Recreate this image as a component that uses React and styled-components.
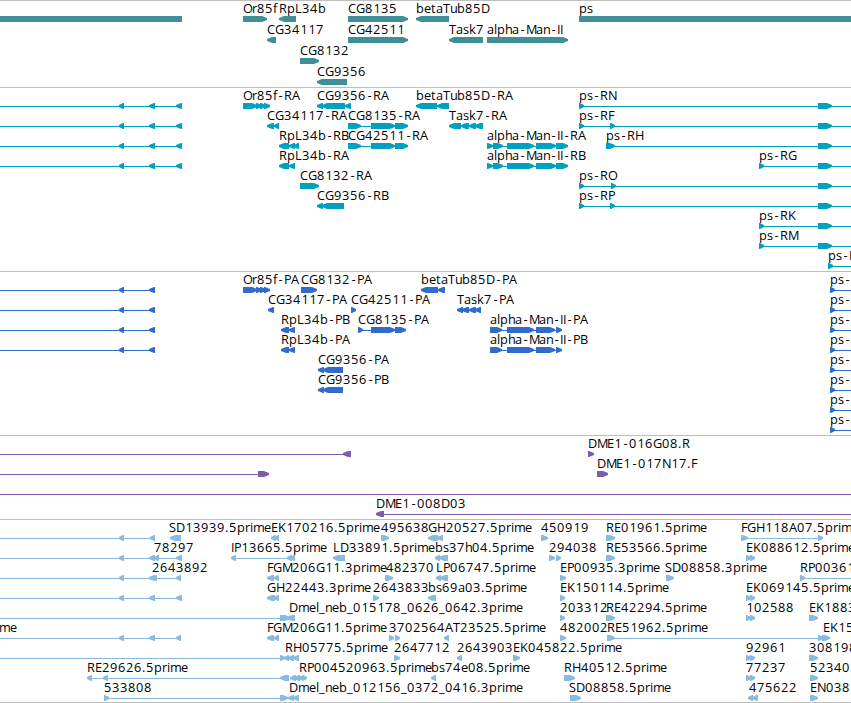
// App.jsx
import styled, { createGlobalStyle } from "styled-components";

const WIDTH = 851;

// advance of each glyph in the label face, in whole pixels
const ADVANCE = {
  A: 8, C: 8, D: 9, E: 7, F: 6, G: 9, H: 9, I: 3, K: 8, L: 7, M: 10, N: 9, O: 9,
  P: 7, R: 8, S: 7, T: 7, a: 7, b: 8, e: 7, f: 4, h: 7, i: 3, k: 7, l: 3,
  m: 11, n: 7, p: 8, r: 5, s: 6, t: 5, u: 7, "-": 7, ".": 4, _: 6,
};

// narrow glyphs sit in the middle of their cell
const OFFSET = { "-": 1.4, 1: 0.5 };

const glyphPositions = (text, start) => {
  let x = start;
  return [...text]
    .map((char) => {
      const current = x + (OFFSET[char] ?? 0);
      x += ADVANCE[char] ?? 8;
      return current;
    })
    .join(" ");
};

// item: { row, label, at, line: [from, to], parts: [[from, to, strand]] }
const item = (row, label, at, parts, line) => ({ row, label, at, parts, line });
const R = (...spans) => spans.map(([a, b]) => [a, b, "R"]);
const L = (...spans) => spans.map(([a, b]) => [a, b, "L"]);

const genes = [
  item(0, "", 0, [[0, 182, ""]]),
  item(0, "Or85f", 243, R([243, 267])),
  item(0, "RpL34b", 279, L([279, 296])),
  item(0, "CG8135", 348, R([348, 408])),
  item(0, "betaTub85D", 416, L([416, 449])),
  item(0, "ps", 579, [[579, 851, ""]]),
  item(1, "CG34117", 267, L([267, 276])),
  item(1, "CG42511", 348, R([348, 408])),
  item(1, "Task7", 449, L([449, 483])),
  item(1, "alpha-Man-II", 487, R([487, 568])),
  item(2, "CG8132", 300, R([300, 319])),
  item(3, "CG9356", 317, L([317, 347])),
];

const or85f = R([243, 257], [256, 262], [260, 266], [264, 270]);
const cg8135 = R([348, 361], [371, 395], [395, 408]);
const alphaRna = R([487, 493], [493, 503], [507, 534], [536, 556], [556, 568]);
const alphaCds = R([490, 502], [507, 534], [536, 555], [556, 562]);

const transcripts = [
  ...[0, 1, 2, 3].map((row) =>
    item(row, "", 0, L([119, 124], [149, 155], [176, 182]), [0, 182])
  ),
  item(0, "Or85f-RA", 243, or85f),
  item(0, "CG9356-RA", 317, L([317, 323], [322, 345], [345, 351])),
  item(0, "betaTub85D-RA", 416, L([416, 437], [437, 449])),
  item(0, "ps-RN", 579, R([579, 584], [818, 832]), [579, 851]),
  item(1, "CG34117-RA", 267, L([267, 274], [274, 279])),
  item(1, "CG8135-RA", 348, cg8135, [348, 408]),
  item(1, "Task7-RA", 449, L([449, 461], [461, 469], [469, 476], [475, 483])),
  item(1, "ps-RF", 579, R([579, 584], [610, 615], [818, 832]), [579, 851]),
  item(2, "RpL34b-RB", 279, L([279, 289], [289, 295], [294, 299])),
  item(2, "CG42511-RA", 348, cg8135, [348, 408]),
  item(2, "alpha-Man-II-RA", 487, alphaRna, [487, 568]),
  item(2, "ps-RH", 606, R([606, 615], [818, 832]), [606, 851]),
  item(3, "RpL34b-RA", 279, L([279, 289], [289, 295])),
  item(3, "alpha-Man-II-RB", 487, alphaRna, [487, 568]),
  item(3, "ps-RG", 759, R([759, 764], [818, 832]), [759, 851]),
  item(4, "CG8132-RA", 300, R([300, 319])),
  item(4, "ps-RO", 579, R([579, 584], [611, 616], [818, 832]), [579, 851]),
  item(5, "CG9356-RB", 317, L([317, 323], [322, 344])),
  item(5, "ps-RP", 579, R([579, 584], [610, 615], [818, 832]), [579, 851]),
  item(6, "ps-RK", 759, R([759, 764], [818, 832]), [759, 851]),
  item(7, "ps-RM", 759, R([759, 764], [818, 832]), [759, 851]),
  item(8, "ps-R", 828, R([828, 833]), [828, 851]),
];

const proteins = [
  ...[0, 1, 2, 3].map((row) => item(row, "", 0, L([119, 124], [149, 155]), [0, 155])),
  item(0, "Or85f-PA", 243, or85f),
  item(0, "CG8132-PA", 301, R([301, 317])),
  item(0, "betaTub85D-PA", 421, L([421, 438], [438, 445])),
  item(1, "CG34117-PA", 268, L([268, 274])),
  item(1, "CG42511-PA", 351, R([351, 356])),
  item(1, "Task7-PA", 457, L([457, 463], [462, 469], [469, 476], [475, 481])),
  item(2, "RpL34b-PB", 281, L([281, 289], [289, 295])),
  item(2, "CG8135-PA", 358, R([358, 363], [371, 395], [395, 406]), [358, 406]),
  item(2, "alpha-Man-II-PA", 490, alphaCds, [490, 561]),
  item(3, "RpL34b-PA", 281, L([281, 289], [289, 295])),
  item(3, "alpha-Man-II-PB", 490, alphaCds, [490, 561]),
  item(4, "CG9356-PA", 318, L([318, 324], [323, 343])),
  item(5, "CG9356-PB", 318, L([318, 324], [323, 343])),
  ...[0, 1, 2, 3, 4, 5, 6, 7].map((row) =>
    item(row, "ps-", 830, R([830, 835]), [830, 851])
  ),
];

const clones = [
  item(0, "", 0, L([343, 351]), [0, 351]),
  item(0, "DME1-016G08.R", 588, R([588, 594])),
  item(1, "", 0, R([258, 269]), [0, 269]),
  item(1, "DME1-017N17.F", 597, R([597, 608])),
  item(2, "", 0, [], [0, 851]),
  item(3, "DME1-008D03", 376, L([376, 384]), [376, 851]),
];

const insertion = R([746, 751], [750, 755]);

const ests = [
  item(0, "", 0, L([119, 124], [150, 155]), [0, 155]),
  item(0, "SD13939.5prime", 169, L([170, 181])),
  item(0, "EK170216.5prime", 271, L([271, 276], [275, 279])),
  item(0, "495638", 381, R([381, 389])),
  item(0, "GH20527.5prime", 428, L([428, 438], [437, 443])),
  item(0, "450919", 541, R([541, 548])),
  item(0, "RE01961.5prime", 606, R([606, 615])),
  item(0, "FGH118A07.5prime", 741, R([741, 748], [818, 823]), [741, 823]),
  item(1, "78297", 154, L([119, 124], [149, 155], [154, 159], [176, 182]), [0, 182]),
  item(1, "IP13665.5prime", 231, L([231, 236], [287, 292], [290, 295]), [231, 294]),
  item(1, "LD33891.5prime", 333, L([333, 345])),
  item(1, "bs37h04.5prime", 435, L([435, 440], [439, 448])),
  item(1, "294038", 549, R([549, 555], [556, 561])),
  item(1, "RE53566.5prime", 606, R([606, 615])),
  item(1, "EK088612.5prime", 746, insertion),
  item(2, "2643892", 152, L([119, 124], [149, 155], [152, 157], [176, 181]), [0, 181]),
  item(2, "FGM206G11.3prime", 267, L([267, 274], [274, 279])),
  item(2, "482370", 386, R([385, 393])),
  item(2, "LP06747.5prime", 436, L([436, 441], [440, 448])),
  item(2, "EP00935.3prime", 560, R([560, 566])),
  item(2, "SD08858.3prime", 665, R([666, 674])),
  item(2, "RP00361", 800, R([800, 805]), [800, 851]),
  item(3, "", 0, L([119, 124], [149, 155], [176, 182]), [0, 182]),
  item(3, "GH22443.3prime", 267, L([267, 275], [274, 279])),
  item(3, "2643833", 373, R([373, 379])),
  item(3, "bs69a03.5prime", 428, L([428, 436])),
  item(3, "EK150114.5prime", 560, R([560, 565])),
  item(3, "EK069145.5prime", 746, insertion),
  item(4, "Dmel_neb_015178_0626_0642.3prime", 289, [...R([280, 290]), ...L([287, 295])], [0, 295]),
  item(4, "203312", 560, R([560, 565])),
  item(4, "RE42294.5prime", 606, R([606, 615])),
  item(4, "102588", 746, insertion),
  item(4, "EK1883", 809, R([809, 818])),
  item(5, "me", -1, L([119, 124], [149, 155], [176, 181]), [0, 181]),
  item(5, "FGM206G11.5prime", 267, L([267, 274], [274, 279])),
  item(5, "3702564", 389, R([389, 394], [395, 400])),
  item(5, "AT23525.5prime", 445, L([444, 449])),
  item(5, "482002", 560, R([560, 566])),
  item(5, "RE51962.5prime", 607, R([607, 615], [818, 823], [822, 830]), [607, 826]),
  item(5, "EK15", 823, []),
  item(6, "RH05775.5prime", 285, [...R([280, 285]), ...L([284, 289], [288, 294], [293, 299])], [0, 299]),
  item(6, "2647712", 394, R([394, 400])),
  item(6, "2643903", 457, L([457, 462])),
  item(6, "EK045822.5prime", 513, R([513, 520])),
  item(6, "92961", 746, insertion),
  item(6, "308198", 809, R([809, 818])),
  item(7, "RE29626.5prime", 87, L([87, 92], [103, 108], [280, 289]), [87, 289]),
  item(7, "RP004520963.5prime", 299, [...L([290, 296], [294, 300]), ...R([298, 303], [302, 307])]),
  item(7, "bs74e08.5prime", 431, L([431, 436])),
  item(7, "RH40512.5prime", 564, R([564, 575])),
  item(7, "77237", 746, insertion),
  item(7, "52340", 810, R([810, 818])),
  item(8, "533808", 104, R([104, 109], [280, 288]), [104, 288]),
  item(8, "Dmel_neb_012156_0372_0416.3prime", 289, L([288, 294], [293, 299])),
  item(8, "SD08858.5prime", 569, R([570, 581])),
  item(8, "475622", 749, L([748, 753], [752, 758])),
  item(8, "EN038", 810, R([810, 818])),
];

const tracks = [
  { name: "genes", color: "#408e96", height: 87, pitch: 21, items: genes },
  { name: "transcripts", color: "#00a0c0", height: 184, pitch: 20, items: transcripts },
  { name: "proteins", color: "#316bce", height: 164, pitch: 20, items: proteins },
  { name: "clones", color: "#7a5caa", height: 84, pitch: 20, items: clones },
  { name: "ests", color: "#88bbdd", height: 183, pitch: 20, items: ests },
];

const blockPath = ([from, to, strand]) => {
  const tip = Math.min(5, to - from - 1);
  if (strand === "R") {
    return `M${from} 15H${to - tip}L${to} 17V19L${to - tip} 21H${from}Z`;
  }
  if (strand === "L") {
    return `M${to} 15H${from + tip}L${from} 17V19L${from + tip} 21H${to}Z`;
  }
  return `M${from} 15H${to}V21H${from}Z`;
};

const Feature = ({ feature, pitch }) => (
  <g transform={`translate(0 ${feature.row * pitch})`}>
    {feature.line && (
      <Intron x={feature.line[0]} y={18} width={feature.line[1] - feature.line[0]} height={1} />
    )}
    {feature.parts.map((part, i) => (
      <path key={i} d={blockPath(part)} />
    ))}
    {feature.label && (
      <Label x={glyphPositions(feature.label, feature.at)} y={12}>
        {feature.label}
      </Label>
    )}
  </g>
);

const App = () => {
  return (
    <>
      <GlobalStyle />
      <Browser>
        {tracks.map((track) => (
          <Track key={track.name} $height={track.height}>
            <Canvas $color={track.color} width={WIDTH} height={track.height - 1}>
              {track.items.map((feature, i) => (
                <Feature key={i} feature={feature} pitch={track.pitch} />
              ))}
            </Canvas>
          </Track>
        ))}
      </Browser>
    </>
  );
};

const GlobalStyle = createGlobalStyle`
  body {
    margin: 0;
    background: white;
    overflow: hidden;
  }
`;

const Browser = styled.main`
  display: flex;
  flex-direction: column;
  width: ${WIDTH}px;
  border-bottom: 1px solid #bebebe;
`;

const Track = styled.section`
  box-sizing: border-box;
  height: ${(props) => props.$height}px;
  border-top: 1px solid #bebebe;
  overflow: hidden;
`;

const Canvas = styled.svg`
  display: block;
  fill: ${(props) => props.$color};
`;

const Intron = styled.rect`
  shape-rendering: crispEdges;
`;

const Label = styled.text`
  fill: black;
  font-family: "Open Sans", "Noto Sans", sans-serif;
  font-size: 12.75px;
`;

export default App;
